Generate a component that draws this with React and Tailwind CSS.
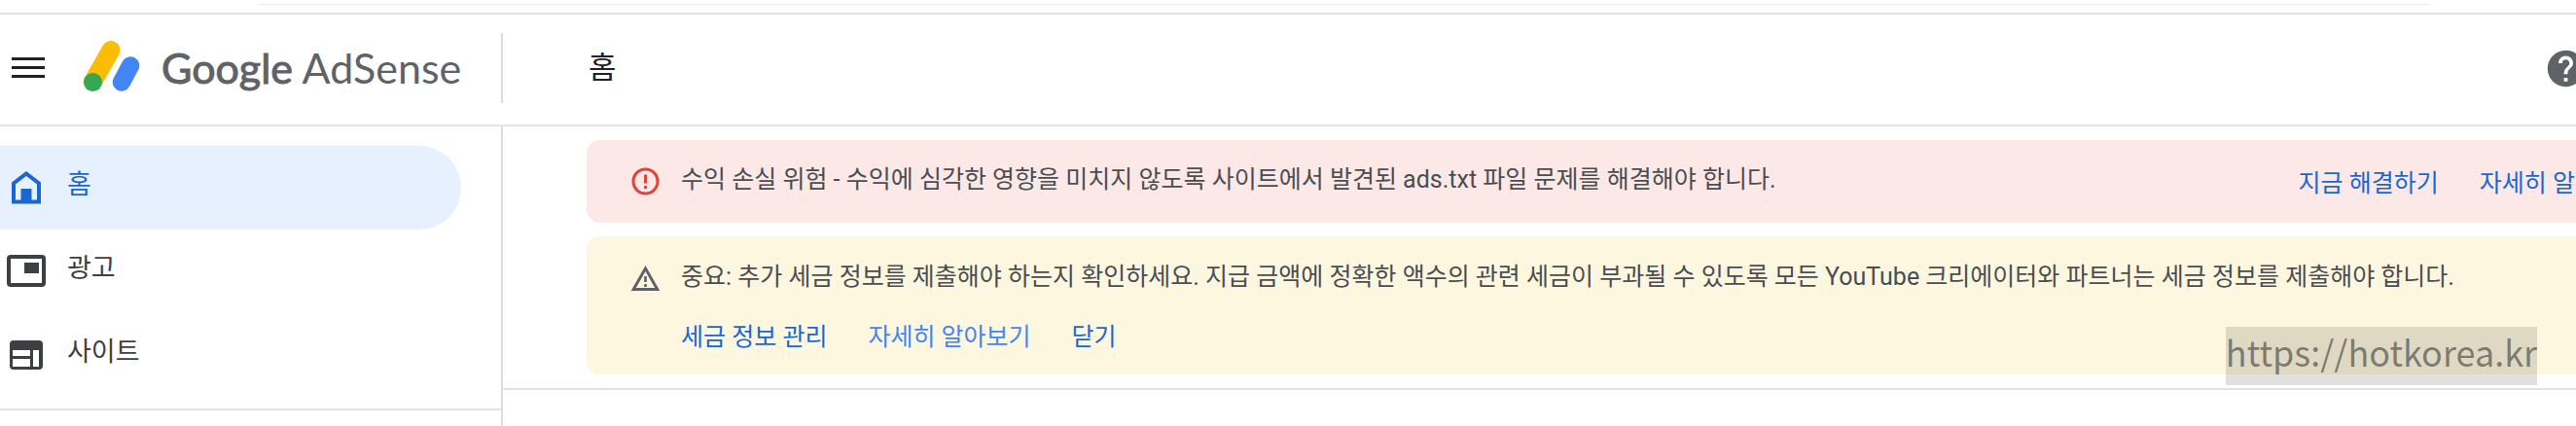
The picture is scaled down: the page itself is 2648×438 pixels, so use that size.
import { clsx } from "clsx";

const navItems = [
    { label: "홈", icon: HomeIcon, active: true },
    { label: "광고", icon: AdsIcon },
    { label: "사이트", icon: SitesIcon },
];

function MenuIcon() {
    return (
        <svg width="34" height="22" viewBox="0 0 34 22" fill="#202124" aria-hidden="true">
            <path d="M0 0h34v3H0zM0 9h34v3H0zM0 18h34v3H0z" />
        </svg>
    );
}

function AdSenseLogo() {
    return (
        <svg width="58" height="52" viewBox="0 0 58 52" fill="none" strokeLinecap="round" aria-hidden="true">
            <path d="M28 9.5L9.5 42" stroke="#fbbc04" strokeWidth="19" />
            <path d="M48 25.5L39 42.5" stroke="#4285f4" strokeWidth="18.5" />
            <circle cx="9.5" cy="42.5" r="9.5" fill="#34a853" />
        </svg>
    );
}

function HelpIcon() {
    return (
        <svg width="45" height="45" viewBox="0 0 24 24" fill="#5f6368" aria-hidden="true">
            <path d="M12 2C6.48 2 2 6.48 2 12s4.48 10 10 10 10-4.48 10-10S17.52 2 12 2zm1 17h-2v-2h2v2zm2.07-7.75l-.9.92C13.45 12.9 13 13.5 13 15h-2v-.5c0-1.1.45-2.1 1.17-2.83l1.24-1.26c.37-.36.59-.86.59-1.41 0-1.1-.9-2-2-2s-2 .9-2 2H8c0-2.21 1.79-4 4-4s4 1.79 4 4c0 .88-.36 1.68-.93 2.25z" />
        </svg>
    );
}

function HomeIcon() {
    return (
        <svg width="40" height="34" viewBox="0 0 40 34" fill="none" aria-hidden="true">
            <path d="M7 31.5V12.5L20 2.5l13 10v19z" stroke="#1967d2" strokeWidth="4" />
            <path d="M14.5 18h11v14h-11z" fill="#1967d2" />
        </svg>
    );
}

function AdsIcon() {
    return (
        <svg width="40" height="34" viewBox="0 0 40 34" fill="none" aria-hidden="true">
            <rect x="2" y="2" width="36" height="29" rx="2" stroke="#3c4043" strokeWidth="4" />
            <path d="M18 8h15v11H18z" fill="#3c4043" />
        </svg>
    );
}

function SitesIcon() {
    return (
        <svg width="40" height="30" viewBox="0 0 40 30" fill="#3c4043" aria-hidden="true">
            <path
                fillRule="evenodd"
                d="M7 0h26a4 4 0 0 1 4 4v22a4 4 0 0 1-4 4H7a4 4 0 0 1-4-4V4a4 4 0 0 1 4-4zM6 10v6h18v-6zm0 9v8h18v-8zm21-9v17h6V10z"
            />
        </svg>
    );
}

function ErrorIcon() {
    return (
        <svg width="29" height="29" viewBox="0 0 29 29" fill="none" aria-hidden="true">
            <circle cx="14.5" cy="14.5" r="12.5" stroke="#e0433a" strokeWidth="3" />
            <path d="M13 7.5h3v9h-3zM13 19h3v3h-3z" fill="#e0433a" />
        </svg>
    );
}

function WarningIcon() {
    return (
        <svg width="29" height="27" viewBox="0 0 29 27" fill="none" aria-hidden="true">
            <path d="M2.2 24.6L14.5 3l12.3 21.6z" stroke="#5f6368" strokeWidth="3" />
            <path d="M13.2 11h2.6v6h-2.6zM13.2 19h2.6v3h-2.6z" fill="#5f6368" />
        </svg>
    );
}

function Header() {
    return (
        <header>
            {/* Bottom edge of the toolbar above */}
            <div className="h-[13px] pt-1 pl-[265px] pr-[150px]">
                <div className="h-px bg-[#ececee]" />
            </div>
            <div className="flex h-[117px] items-center border-y-2 border-[#e2e3e8] pb-[3px]">
                <div className="flex h-[72px] w-[517px] shrink-0 items-center border-r-2 border-[#dadce0] pl-3">
                    <button type="button" aria-label="메뉴" className="mr-10">
                        <MenuIcon />
                    </button>
                    <a href="#home" className="flex items-center gap-[22px] pb-1 text-[#5f6368]">
                        <AdSenseLogo />
                        <span className="whitespace-nowrap pt-1 font-['Lato',sans-serif] text-[43px] leading-[52px]">
                            <span className="[-webkit-text-stroke:1px]">Google</span> AdSense
                        </span>
                    </a>
                </div>
                <h1 className="ml-[88px] flex-1 text-[31px] leading-10 text-[#202124]">홈</h1>
                <button type="button" aria-label="도움말" className="-mr-3 shrink-0">
                    <HelpIcon />
                </button>
            </div>
        </header>
    );
}

function Sidebar() {
    return (
        <nav className="w-[517px] shrink-0 border-r-2 border-[#dadce0] pt-5">
            <ul className="border-b-2 border-[#e2e3e8] pb-3">
                {navItems.map(({ label, icon: Icon, active }) => (
                    <li key={label}>
                        <a
                            href="#nav"
                            className={clsx(
                                "mr-[41px] flex h-[86px] items-center gap-[22px] rounded-r-full pl-[7px] text-[27px] leading-9",
                                active ? "bg-[#e6f0ff] text-[#1967d2]" : "text-[#3c4043]"
                            )}
                        >
                            <Icon />
                            <span className="pb-[6px]">{label}</span>
                        </a>
                    </li>
                ))}
            </ul>
        </nav>
    );
}

export default function App() {
    return (
        <div className="flex min-h-screen flex-col overflow-hidden bg-white font-['Roboto','Noto_Sans_CJK_KR',sans-serif]">
            <Header />
            <div className="flex flex-1">
                <Sidebar />
                <main className="min-w-0 flex-1">
                    <div className="relative border-b-2 border-[#e2e3e8] pt-[14px] pb-[14px] pl-[86px]">
                        <div className="-mr-28 space-y-[14px] text-[25px] leading-9 text-[#4a4d51]">
                            <section className="flex h-[85px] items-center whitespace-nowrap rounded-[14px] bg-[#fce8e6] pl-[46px] pr-11">
                                <ErrorIcon />
                                <p className="ml-[22px] flex-1 pb-1">
                                    수익 손실 위험 - 수익에 심각한 영향을 미치지 않도록 사이트에서 발견된 ads.txt 파일 문제를 해결해야 합니다.
                                </p>
                                <div className="flex gap-[42px] pt-1 text-[#1967d2]">
                                    <a href="#fix">지금 해결하기</a>
                                    <a href="#more">자세히 알아보기</a>
                                </div>
                            </section>
                            <section className="flex whitespace-nowrap rounded-[14px] bg-[#fef7e0] pt-6 pb-5 pl-[46px]">
                                <div className="pt-[6px]">
                                    <WarningIcon />
                                </div>
                                <div className="ml-[22px]">
                                    <p>
                                        중요: 추가 세금 정보를 제출해야 하는지 확인하세요. 지급 금액에 정확한 액수의 관련 세금이 부과될 수 있도록 모든 YouTube 크리에이터와 파트너는 세금 정보를 제출해야 합니다.
                                    </p>
                                    <div className="mt-[26px] flex gap-[42px] text-[#1967d2]">
                                        <button type="button">세금 정보 관리</button>
                                        <a href="#tax" className="text-[#4285f4]">자세히 알아보기</a>
                                        <button type="button">닫기</button>
                                    </div>
                                </div>
                            </section>
                        </div>
                        {/* Site watermark */}
                        <div className="absolute right-10 bottom-[3px] h-[60px] bg-black/12 font-['Noto_Sans_CJK_KR',sans-serif] text-[36px] leading-[50px] text-black/45">
                            https://hotkorea.kr
                        </div>
                    </div>
                </main>
            </div>
        </div>
    );
}
